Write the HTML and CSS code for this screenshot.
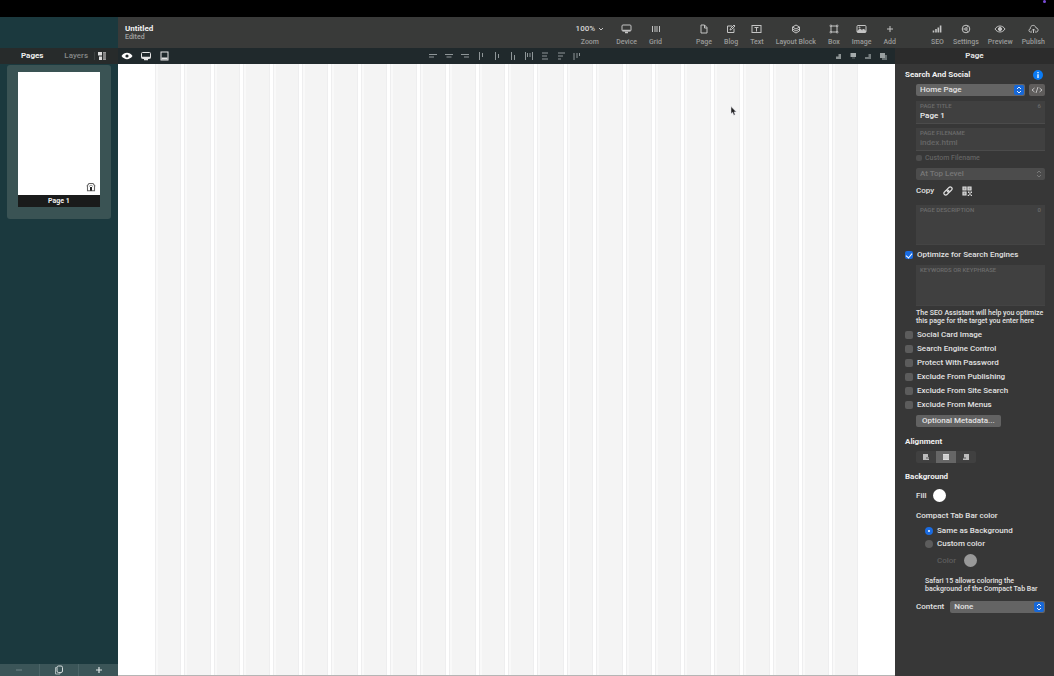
FILE: index.html
```html
<!DOCTYPE html>
<html lang="en">
<head>
  <meta charset="utf-8">
  <title>Untitled</title>
  <link rel="stylesheet" href="styles.css">
</head>

<body>
  <div class="menubar"><span class="dot"></span></div>

  <div class="app">

    <!-- pages sidebar -->
    <aside class="sidebar">
      <div class="tabs">
        <button class="tab active">Pages</button>
        <button class="tab">Layers</button>
        <button class="tab-view" aria-label="View">
          <svg width="9" height="8" viewBox="0 0 9 8"><path d="M0 0h4v3.500H0zM1 4.500h3V8H1z" fill="#ddd"/><path d="M5 0h3v8H5z" fill="#999"/><path d="M5 2h3M5 4h3M5 6h3" stroke="#555" stroke-width=".6"/></svg>
        </button>
      </div>
      <div class="page-card">
        <div class="thumb">
          <svg width="10" height="10" viewBox="0 0 10 10"><path d="M.8 4.300 3 1.500h4l2.200 2.800M1.500 4v4.800h7V4" fill="none" stroke="#666" stroke-width="1.100"/><path d="M3 4.500 5 3l2 1.500" fill="none" stroke="#777" stroke-width=".8"/><path d="M4 5h2v3.800H4z" fill="#222"/></svg>
        </div>
        <div class="thumb-name">Page 1</div>
      </div>
      <div class="side-footer">
        <button aria-label="Remove"><svg width="8" height="8" viewBox="0 0 8 8"><path d="M1 4h6" stroke="#718587"/></svg></button>
        <button aria-label="Duplicate"><svg width="10" height="10" viewBox="0 0 10 10"><rect x="3" y="1" width="5.500" height="6.500" rx="1.500" fill="none" stroke="#d5dddd"/><path d="M3 2.500H1.500V9H6V7.500" fill="none" stroke="#a9b8b8"/></svg></button>
        <button aria-label="Add page"><svg width="8" height="8" viewBox="0 0 8 8"><path d="M1 4h6M4 1v6" stroke="#dfe6e6" stroke-width="1.200"/></svg></button>
      </div>
    </aside>

    <div class="main">
      <header class="toolbar">
        <div class="doc">
          <div class="doc-name">Untitled</div>
          <div class="doc-state">Edited</div>
        </div>

        <div class="tools view-tools">
          <button class="tool zoom"><span class="ico zoom-value">100% <svg width="6" height="5" viewBox="0 0 6 5"><path d="m1 1 2 2 2-2"/></svg></span>Zoom</button>
          <button class="tool"><span class="ico"><svg width="11" height="10" viewBox="0 0 11 10"><rect x="1" y="1" width="9" height="6" rx="1"/><path d="M1.500 6.500h8M4 8.500h3" stroke-width="1.600"/></svg></span>Device</button>
          <button class="tool"><span class="ico"><svg width="10" height="10" viewBox="0 0 10 10"><path d="M1.500 2v6M4 2v6M6 2v6M8.500 2v6"/></svg></span>Grid</button>
        </div>

        <div class="tools insert-tools">
          <button class="tool"><span class="ico"><svg width="10" height="10" viewBox="0 0 10 10"><path d="M2 1h3.500L8 3.500V9H2zM5.500 1v3H8"/></svg></span>Page</button>
          <button class="tool"><span class="ico"><svg width="10" height="10" viewBox="0 0 10 10"><path d="M6 2H1.500v6.500H8V4.500M4 6l.5-1.500L8 1l1 1-3.500 3.500z"/></svg></span>Blog</button>
          <button class="tool"><span class="ico"><svg width="11" height="10" viewBox="0 0 11 10"><rect x="1" y="1.500" width="9" height="7"/><path d="M3.500 3.500h4M5.500 3.500v4"/></svg></span>Text</button>
          <button class="tool"><span class="ico"><svg width="10" height="10" viewBox="0 0 10 10"><path d="m5 1 3.500 2L5 5 1.500 3zM1.500 3v2L5 7l3.500-2V3M1.500 5v2L5 9l3.500-2V5"/></svg></span>Layout Block</button>
          <button class="tool"><span class="ico"><svg width="10" height="10" viewBox="0 0 10 10"><rect x="2" y="2" width="6" height="6"/><path d="M1 1h1.500v1.500H1zM7.500 1H9v1.500H7.500zM1 7.500h1.500V9H1zM7.500 7.500H9V9H7.500z" stroke-width=".6"/></svg></span>Box</button>
          <button class="tool"><span class="ico"><svg width="11" height="10" viewBox="0 0 11 10"><rect x="1" y="1.500" width="9" height="7" rx="1"/><path d="m1.500 7 2.500-2 2 1.500L7.500 5l2 2v1h-8z" fill="#c4c4c4"/><circle cx="3.500" cy="3.500" r=".5"/></svg></span>Image</button>
          <button class="tool"><span class="ico"><svg width="10" height="10" viewBox="0 0 10 10"><path d="M2 5h6M5 2v6"/></svg></span>Add</button>
        </div>

        <div class="tools file-tools">
          <button class="tool"><span class="ico"><svg width="10" height="10" viewBox="0 0 10 10"><path d="M1.500 8.500v-2M4 8.500V5M6.300 8.500v-5M8.600 8.500V1.500" stroke-width="1.600"/></svg></span>SEO</button>
          <button class="tool"><span class="ico"><svg width="10" height="10" viewBox="0 0 10 10"><circle cx="5" cy="5" r="3.800"/><circle cx="5" cy="5" r="1.200"/><path d="M3.800 5H1.500M5.600 4l1.200-2M5.600 6l1.200 2" stroke-width=".7"/></svg></span>Settings</button>
          <button class="tool"><span class="ico"><svg width="12" height="10" viewBox="0 0 12 10"><path d="M1 5c2.500-4 7.500-4 10 0-2.500 4-7.500 4-10 0z"/><circle cx="6" cy="5" r="1.600" fill="#c4c4c4"/></svg></span>Preview</button>
          <button class="tool"><span class="ico"><svg width="11" height="10" viewBox="0 0 11 10"><path d="M4 8H2.500C.5 8 .5 5 2.300 4.800 2 1 7 0 8 3.800 10.800 4 10.500 8 8.500 8H7M5.500 9V5M4 6.500 5.500 5 7 6.500"/></svg></span>Publish</button>
        </div>
      </header>

      <div class="content">
        <div class="workspace">
          <div class="optionbar">
            <div class="devices">
              <button aria-label="Show guides"><svg width="12" height="10" viewBox="0 0 12 10"><path d="M.5 5C3.500.8 8.500.8 11.500 5c-3 4.200-8 4.200-11 0z" fill="#fff"/><circle cx="6" cy="5" r="1.600" fill="#20292c"/></svg></button>
              <button aria-label="Desktop"><svg width="12" height="10" viewBox="0 0 12 10"><rect x="1.500" y="1.500" width="9" height="6" rx="1" fill="none" stroke="#e5e5e5"/><path d="M1.500 6.500h9M4 8.500h4" stroke="#e5e5e5" stroke-width="1.500"/></svg></button>
              <button aria-label="Tablet"><svg width="12" height="10" viewBox="0 0 12 10"><rect x="2" y="1" width="7" height="8" fill="none" stroke="#e5e5e5"/><path d="M2.500 7.500h6" stroke="#e5e5e5" stroke-width="2"/></svg></button>
            </div>
            <div class="aligns">
              <button aria-label="Align left"><svg width="9" height="8" viewBox="0 0 9 8"><path d="M1 2.500h8M1 5h5"/></svg></button>
              <button aria-label="Align center"><svg width="9" height="8" viewBox="0 0 9 8"><path d="M1 2.500h8M2.500 5h5"/></svg></button>
              <button aria-label="Align right"><svg width="9" height="8" viewBox="0 0 9 8"><path d="M1 2.500h8M4 5h5"/></svg></button>
              <button aria-label="Align top"><svg width="9" height="8" viewBox="0 0 9 8"><path d="M3.500 0v8M6.500 1v4"/></svg></button>
              <button aria-label="Align middle"><svg width="9" height="8" viewBox="0 0 9 8"><path d="M3.500 0v8M6.500 2v4"/></svg></button>
              <button aria-label="Align bottom"><svg width="9" height="8" viewBox="0 0 9 8"><path d="M3.500 0v8M6.500 3v5"/></svg></button>
              <button aria-label="Distribute across"><svg width="9" height="8" viewBox="0 0 9 8"><path d="M1.500 0v8M3.500 1v4M6 1v4M8.500 0v8"/></svg></button>
              <button aria-label="Distribute down"><svg width="9" height="8" viewBox="0 0 9 8"><path d="M2 1h6M2 4h5M2 7h6"/></svg></button>
              <button aria-label="Same width"><svg width="9" height="8" viewBox="0 0 9 8"><path d="M2 1h7M2 4h5M2 7h3"/></svg></button>
              <button aria-label="Same height"><svg width="9" height="8" viewBox="0 0 9 8"><path d="M2 1v7M5 1v5M7.500 1v3"/></svg></button>
            </div>
            <div class="orders">
              <button aria-label="Send back"><svg width="8" height="8" viewBox="0 0 8 8"><path d="M2 4.500h2.500V2H7v5H2z" fill="#8b9293"/></svg></button>
              <button aria-label="Bring front"><svg width="8" height="8" viewBox="0 0 8 8"><path d="M1.500 1H7v4H1.500z" fill="#a5abac"/><path d="M3 6h3" stroke="#626b6d"/></svg></button>
              <button aria-label="Send backward"><svg width="8" height="8" viewBox="0 0 8 8"><path d="M1 5h3.500V2H7v5H1z" fill="#737b7d"/></svg></button>
              <button aria-label="Bring forward"><svg width="8" height="8" viewBox="0 0 8 8"><path d="M3 3h5v5H3z" fill="#656e70"/><path d="M1 1h5v5H1z" fill="#989fa0"/></svg></button>
            </div>
          </div>

          <div class="canvas">
            <div class="grid">
              <i></i><i></i><i></i><i></i><i></i><i></i><i></i><i></i>
              <i></i><i></i><i></i><i></i><i></i><i></i><i></i><i></i>
              <i></i><i></i><i></i><i></i><i></i><i></i><i></i><i></i>
            </div>
            <svg class="cursor" width="7" height="10" viewBox="0 0 7 10"><path d="M1 .5v7.300l1.600-1.500L3.800 9.200l1.400-.6L4 5.900h2.300z" fill="#222" stroke="#e4e4ee" stroke-width=".5"/></svg>
          </div>
        </div>

        <!-- inspector -->
        <aside class="inspector">
          <div class="inspector-title">Page</div>
          <form class="inspector-body">

            <h2 class="first">Search And Social
              <svg class="info" width="10" height="10" viewBox="0 0 10 10"><circle cx="5" cy="5" r="5" fill="#0a7bf5"/><path d="M5 2v1.300M5 4.200V8" stroke="#fff" stroke-width="1.300"/></svg>
            </h2>

            <div class="row select-row">
              <div class="select">
                <select aria-label="Page type"><option>Home Page</option></select>
                <svg class="stepper" width="10" height="10" viewBox="0 0 10 10"><rect width="10" height="10" rx="2" fill="#1768d8" stroke="none"/><path d="m3 4 2-2 2 2M3 6l2 2 2-2"/></svg>
              </div>
              <button type="button" class="code" aria-label="Code"><svg width="12" height="8" viewBox="0 0 12 8"><path d="M3.500 2 1 4l2.500 2M8.500 2 11 4 8.500 6M7 1 5 7" fill="none" stroke="#ccc" stroke-width=".9"/></svg></button>
            </div>

            <div class="field title-field">
              <label for="title">PAGE TITLE <span>6</span></label>
              <input type="text" id="title" value="Page 1">
            </div>
            <div class="field">
              <label for="filename">PAGE FILENAME</label>
              <input type="text" id="filename" placeholder="index.html" disabled>
            </div>
            <label class="check small off"><input type="checkbox" disabled>Custom Filename</label>
            <div class="select level">
              <select aria-label="Level" disabled><option>At Top Level</option></select>
              <svg class="stepper" width="10" height="10" viewBox="0 0 10 10"><path d="m3 4 2-2 2 2M3 6l2 2 2-2"/></svg>
            </div>

            <div class="row copy">Copy
              <button type="button" aria-label="Copy link"><svg width="10" height="10" viewBox="0 0 10 10"><g transform="rotate(-45 5 5)" fill="none" stroke="#ddd" stroke-width="1.200"><rect x="0" y="3.200" width="5.700" height="3.600" rx="1.800"/><rect x="4.300" y="3.200" width="5.700" height="3.600" rx="1.800"/></g></svg></button>
              <button type="button" aria-label="Copy QR code"><svg width="10" height="10" viewBox="0 0 10 10"><path d="M1 1h3v3H1zM6 1h3v3H6zM1 6h3v3H1z" fill="#999" stroke="#ddd" stroke-width="1.200"/><path d="M6 5.500h1.500V7H6zM8.500 5.500H10V7H8.500zM7.200 7.200h1.500v1.500H7.200zM5.700 8.700h1.500V10H5.700zM8.700 8.700H10V10H8.700z" fill="#ddd"/></svg></button>
            </div>

            <div class="field area description">
              <label for="description">PAGE DESCRIPTION <span>0</span></label>
              <textarea id="description"></textarea>
            </div>
            <label class="check seo"><input type="checkbox" checked>Optimize for Search Engines</label>
            <div class="field area keywords">
              <label for="keywords">KEYWORDS OR KEYPHRASE</label>
              <textarea id="keywords"></textarea>
            </div>
            <p class="note">The SEO Assistant will help you optimize<br>this page for the target you enter here</p>

            <div class="checks">
              <label class="check"><input type="checkbox">Social Card Image</label>
              <label class="check"><input type="checkbox">Search Engine Control</label>
              <label class="check"><input type="checkbox">Protect With Password</label>
              <label class="check"><input type="checkbox">Exclude From Publishing</label>
              <label class="check"><input type="checkbox">Exclude From Site Search</label>
              <label class="check"><input type="checkbox">Exclude From Menus</label>
            </div>
            <button type="button" class="metadata">Optional Metadata...</button>

            <h2>Alignment</h2>
            <div class="segments">
              <button type="button" aria-label="Left"><svg width="8" height="8" viewBox="0 0 8 8"><path d="M1 1h5v3h1v3H1z" fill="#bbb"/><path d="M4 5h3" stroke="#555"/></svg></button>
              <button type="button" class="active" aria-label="Center"><svg width="8" height="8" viewBox="0 0 8 8"><path d="M1 1h6v6H1z" fill="#ddd"/><path d="M1 3h6M1 5h6" stroke="#aaa" stroke-width=".6"/></svg></button>
              <button type="button" aria-label="Right"><svg width="8" height="8" viewBox="0 0 8 8"><path d="M2 1h5v6H1V5h1z" fill="#bbb"/><path d="M1 5h3" stroke="#555"/></svg></button>
            </div>

            <h2>Background</h2>
            <div class="row fill">Fill <button type="button" class="swatch" aria-label="Fill color"></button></div>

            <div class="compact">Compact Tab Bar color</div>
            <label class="radio"><input type="radio" name="tabbar" checked>Same as Background</label>
            <label class="radio"><input type="radio" name="tabbar">Custom color</label>
            <div class="row color">Color <button type="button" class="swatch" aria-label="Custom color" disabled></button></div>
            <p class="note safari">Safari 15 allows coloring the<br>background of the Compact Tab Bar</p>

            <div class="row content-row">
              <label for="bgcontent">Content</label>
              <div class="select">
                <select id="bgcontent"><option>None</option></select>
                <svg class="stepper" width="10" height="10" viewBox="0 0 10 10"><rect width="10" height="10" rx="2" fill="#1768d8" stroke="none"/><path d="m3 4 2-2 2 2M3 6l2 2 2-2"/></svg>
              </div>
            </div>
          </form>
        </aside>
      </div>
    </div>
  </div>
</body>
</html>
```

FILE: styles.css
```css
* {
  box-sizing: border-box;
}

body {
  margin: 0;
  height: 100vh;
  display: flex;
  flex-direction: column;
  overflow: hidden;
  background: #000;
  color: #e2e2e2;
  font-family: Roboto, "Liberation Sans", sans-serif;
  font-size: 8px;
  font-weight: 500;
  line-height: 12px;
}

button, input, select, textarea {
  font: inherit;
  color: inherit;
  margin: 0;
  padding: 0;
  border: none;
  background: none;
}

svg {
  display: block;
  flex: none;
}

.menubar {
  flex: none;
  height: 17px;
  padding-right: 8px;
  display: flex;
  justify-content: flex-end;
}

.dot {
  width: 3px;
  height: 3px;
  border-radius: 50%;
  background: #7a4bd8;
}

.app {
  flex: 1;
  min-height: 0;
  display: flex;
}

/* sidebar */
.sidebar {
  width: 118px;
  flex: none;
  display: flex;
  flex-direction: column;
  padding-top: 31px;
  background: #1b393e;
}

.tabs {
  height: 16px;
  display: flex;
  align-items: center;
  padding: 0 11px 0 21px;
  background: #272b2b;
}

.tab {
  color: #858888;
  margin-right: 6px;
}

.tab.active {
  color: #eee;
  font-weight: 700;
  margin-right: auto;
}

.tab-view {
  padding-left: 3px;
  border-left: 1px solid #3c4040;
}

.page-card {
  margin: 1px 7px 0;
  padding: 7px 11px 12px;
  border-radius: 3px;
  background: #3a5354;
}

.thumb {
  height: 123px;
  padding: 0 4px 3px;
  display: flex;
  align-items: flex-end;
  justify-content: flex-end;
  background: #fff;
}

.thumb-name {
  text-align: center;
  font-size: 7px;
  font-weight: 700;
  color: #eee;
  background: #1a1b1b;
}

.side-footer {
  height: 12px;
  margin-top: auto;
  display: flex;
  background: #3b5558;
}

.side-footer button {
  flex: 1;
  display: flex;
  align-items: center;
  justify-content: center;
}

.side-footer button + button {
  border-left: 1px solid #4b6467;
}

/* toolbar */
.main {
  flex: 1;
  min-width: 0;
  display: flex;
  flex-direction: column;
}

.toolbar {
  height: 31px;
  flex: none;
  display: flex;
  padding: 5px 9px 0 7px;
  background: #393a39;
}

.doc {
  margin-right: auto;
  padding-top: 2px;
  line-height: 9px;
}

.doc-name {
  font-weight: 700;
  color: #f2f2f2;
}

.doc-state {
  font-size: 7px;
  color: #a2a2a2;
}

.tools {
  display: flex;
  align-items: flex-start;
  gap: 12px;
}

.insert-tools {
  margin: 0 35px 0 34px;
}

.file-tools {
  gap: 9px;
}

.tool {
  display: flex;
  flex-direction: column;
  align-items: center;
  font-size: 7px;
  color: #9a9a9a;
}

.ico {
  height: 14px;
  display: flex;
  align-items: center;
}

.ico svg {
  fill: none;
  stroke: #c4c4c4;
}

.zoom-value {
  gap: 3px;
  font-size: 8px;
  color: #d5d5d5;
}

/* workspace */
.content {
  flex: 1;
  min-height: 0;
  display: flex;
}

.workspace {
  flex: 1;
  min-width: 0;
  display: flex;
  flex-direction: column;
}

.optionbar {
  height: 16px;
  flex: none;
  display: grid;
  grid-template-columns: 1fr auto 1fr;
  align-items: center;
  padding: 0 8px 0 3px;
  background: #20292c;
}

.devices {
  display: flex;
  gap: 7px;
}

.aligns {
  display: flex;
  gap: 7px;
}

.aligns svg {
  stroke: #8f9698;
}

.orders {
  display: flex;
  justify-content: flex-end;
  gap: 7px;
}

.canvas {
  flex: 1;
  position: relative;
  display: flex;
  padding: 0 37px;
  background: #fff;
  border-bottom: 1px solid #b5b5b5;
}

.grid {
  flex: 1;
  display: grid;
  grid-template-columns: repeat(24, 1fr);
  gap: 3px;
  background: #fff;
}

.grid i {
  background: #f4f4f4;
  border: solid #eeeeef;
  border-width: 0 1px;
  box-shadow: inset 2px 0 #f9f9f9;
}

.cursor {
  position: absolute;
  left: 612px;
  top: 42px;
}

/* inspector */
.inspector {
  width: 159px;
  flex: none;
  background: #373737;
}

.inspector-title {
  height: 16px;
  line-height: 16px;
  text-align: center;
  font-weight: 700;
  background: #2c2c2c;
}

.inspector-body {
  display: flex;
  flex-direction: column;
  padding: 5px 9px 0 21px;
}

.inspector h2 {
  display: flex;
  align-items: center;
  justify-content: space-between;
  margin: 8px 0 0 -11px;
  font-size: 8px;
  font-weight: 700;
  line-height: 12px;
  color: #f0f0f0;
}

.inspector h2.first {
  margin-top: 0;
}

.info {
  margin-right: 2px;
}

.row {
  display: flex;
  align-items: center;
}

.select-row {
  gap: 4px;
  margin-top: 3px;
}

.select {
  position: relative;
  flex: 1;
  display: flex;
}

.select select {
  appearance: none;
  flex: 1;
  height: 12px;
  padding-left: 4px;
  border-radius: 2px;
  background: #646464;
}

.stepper {
  position: absolute;
  top: 1px;
  right: 1px;
  fill: none;
  stroke: #e8eefa;
}

.code {
  width: 16px;
  height: 12px;
  display: flex;
  align-items: center;
  justify-content: center;
  border-radius: 2px;
  background: #5f5d5c;
}

.field {
  height: 23px;
  margin-top: 4px;
  padding: 1px 4px 0;
  display: flex;
  flex-direction: column;
  background: #404040;
  border-bottom: 1px solid #4b4b4b;
}

.field label {
  display: flex;
  justify-content: space-between;
  font-size: 6px;
  line-height: 8px;
  color: #6c6c6c;
}

.field input {
  width: 100%;
  height: 12px;
  color: #eee;
}

.field input::placeholder {
  color: #666;
}

.title-field {
  margin-top: 5px;
}

.field.area {
  height: 40px;
  border-bottom-color: #444;
}

.field textarea {
  flex: 1;
  resize: none;
}

.description.area {
  margin-top: 8px;
}

.keywords.area {
  height: 41px;
  margin-top: 3px;
}

.check, .radio {
  display: flex;
  align-items: center;
  gap: 4px;
  margin-left: -11px;
  height: 14px;
}

.check input {
  appearance: none;
  width: 8px;
  height: 8px;
  border-radius: 2px;
  background: #5c5c5c;
}

.check input:checked {
  background: #1a6be0;
  display: grid;
  place-items: center;
}

.check input:checked::after {
  content: "";
  width: 3px;
  height: 5px;
  border: solid #fff;
  border-width: 0 1px 1px 0;
  transform: rotate(40deg);
}

.check.small {
  margin: 0;
  gap: 3px;
  font-size: 7px;
}

.check.small input {
  width: 6px;
  height: 6px;
}

.check.off {
  color: #636363;
}

.check.off input {
  background: #4d4d4d;
}

.level {
  margin-top: 3px;
}

.level select {
  background: #4c4c4c;
  color: #777;
  opacity: 1;
}

.level .stepper {
  stroke: #777;
}

.copy {
  gap: 9px;
  margin-top: 5px;
}

.seo {
  margin-top: 3px;
}

.field.area + .note {
  margin-bottom: 3px;
}

.note {
  margin: 3px 0 4px;
  font-size: 7px;
  line-height: 8px;
  white-space: nowrap;
}

.metadata {
  align-self: flex-start;
  height: 12px;
  margin-top: 3px;
  padding: 0 6px;
  border-radius: 2px;
  background: #626262;
}

.metadata + h2 {
  margin-top: 9px;
}

.segments {
  align-self: flex-start;
  display: flex;
  margin-top: 3px;
  border-radius: 2px;
  background: #404040;
}

.segments button {
  width: 20px;
  height: 12px;
  display: flex;
  align-items: center;
  justify-content: center;
}

.segments .active {
  background: #666;
}

.swatch {
  width: 13px;
  height: 13px;
  border-radius: 50%;
  background: #fff;
}

.fill {
  gap: 6px;
  margin-top: 6px;
}

.compact {
  margin: 8px 0 2px;
}

.radio {
  height: 13px;
  margin-left: 9px;
}

.radio input {
  appearance: none;
  width: 8px;
  height: 8px;
  border-radius: 50%;
  background: #5c5c5c;
}

.radio input:checked {
  background: #fff;
  border: 3px solid #1a6be0;
}

.color {
  gap: 8px;
  margin: 4px 0 0 21px;
  color: #5d5d5d;
}

.color .swatch {
  background: #999;
}

.safari.note {
  margin: 10px 0 8px 9px;
}

.content-row {
  gap: 6px;
}
```
